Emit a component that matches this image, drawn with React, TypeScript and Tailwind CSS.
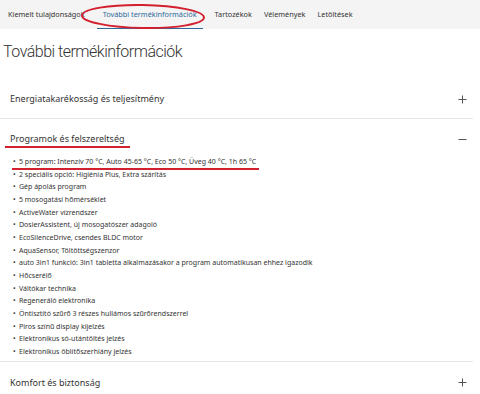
import React from "react";

const tabs = [
  { name: "Kiemelt tulajdonságok", active: false },
  { name: "További termékinformációk", active: true },
  { name: "Tartozékok", active: false },
  { name: "Vélemények", active: false },
  { name: "Letöltések", active: false },
];

const features = [
  "5 program: Intenzív 70 °C, Auto 45-65 °C, Eco 50 °C, Üveg 40 °C, 1h 65 °C",
  "2 speciális opció: Higiénia Plus, Extra szárítás",
  "Gép ápolás program",
  "5 mosogatási hőmérséklet",
  "ActiveWater vízrendszer",
  "DosierAssistent, új mosogatószer adagoló",
  "EcoSilenceDrive, csendes BLDC motor",
  "AquaSensor, Töltöttségszenzor",
  "auto 3in1 funkció: 3in1 tabletta alkalmazásakor a program automatikusan ehhez igazodik",
  "Hőcserélő",
  "Váltókar technika",
  "Regeneráló elektronika",
  "Öntisztító szűrő 3 részes hullámos szűrőrendszerrel",
  "Piros színű display kijelzés",
  "Elektronikus só-utántöltés jelzés",
  "Elektronikus öblítőszerhiány jelzés",
];

const Plus = () => (
  <svg width="9" height="9" viewBox="0 0 9 9" className="text-[#555]">
    <path d="M4.5 0.5v8M0.5 4.5h8" stroke="currentColor" strokeWidth="1" />
  </svg>
);

const Minus = () => (
  <svg width="9" height="9" viewBox="0 0 9 9" className="text-[#555]">
    <path d="M0.5 4.5h8" stroke="currentColor" strokeWidth="1" />
  </svg>
);

export default function App() {
  return (
    <div
      className="w-[480px] h-[394px] bg-white overflow-hidden text-[#333]"
      style={{ fontFamily: '"Noto Sans", Arial, sans-serif' }}
    >
      <nav className="relative flex h-[29px] bg-[#f4f4f4] pl-[8px] gap-[12px] text-[7.3px]">
        {tabs.map((tab) => (
          <div
            key={tab.name}
            className={
              tab.active
                ? "flex items-center px-[6px] border-b-[1.5px] border-[#2e6a9c] text-[#2e6a9c]"
                : "flex items-center"
            }
          >
            {tab.name}
          </div>
        ))}
        {/* red hand-drawn highlight */}
        <svg
          className="absolute left-0 top-0 pointer-events-none"
          width="480"
          height="34"
        >
          <ellipse
            cx="143"
            cy="16.5"
            rx="61"
            ry="11.5"
            fill="none"
            stroke="#d3202f"
            strokeWidth="2"
            transform="rotate(1 143 16.5)"
          />
        </svg>
      </nav>

      <h1
        className="mt-[13px] ml-[3px] text-[16px] leading-[20px] font-light tracking-[-0.5px] text-[#333]"
        style={{ fontFamily: 'Roboto, "Noto Sans", sans-serif' }}
      >
        További termékinformációk
      </h1>

      <div className="mt-[18px] w-[473px]">
        <div className="flex items-center justify-between pl-[10px] pr-[6px] pt-[13px] pb-[13px] border-b border-[#e6e6e6]">
          <span className="text-[9px] leading-[12px]">
            Energiatakarékosság és teljesítmény
          </span>
          <Plus />
        </div>

        <div className="border-b border-[#e6e6e6] pb-[2px]">
          <div className="flex items-center justify-between pl-[10px] pr-[6px] pt-[14px] pb-[11px]">
            <span className="relative text-[9px] leading-[12px]">
              Programok és felszereltség
              <span className="absolute left-[-5px] right-[-5px] top-[13px] h-[1.5px] bg-[#d3202f]" />
            </span>
            <Minus />
          </div>
          <ul className="pl-[13px] text-[7px] leading-[12.67px]">
            {features.map((f, i) => (
              <li key={f} className="flex">
                <span className="w-[6px]">•</span>
                <span className="relative">
                  {f}
                  {i === 0 && (
                    <span className="absolute left-[-7px] right-[-3px] top-[12px] h-[1.5px] bg-[#d3202f]" />
                  )}
                </span>
              </li>
            ))}
          </ul>
        </div>

        <div className="flex items-center justify-between pl-[10px] pr-[6px] pt-[15px] pb-[13px]">
          <span className="text-[9px] leading-[12px]">Komfort és biztonság</span>
          <Plus />
        </div>
      </div>
    </div>
  );
}
